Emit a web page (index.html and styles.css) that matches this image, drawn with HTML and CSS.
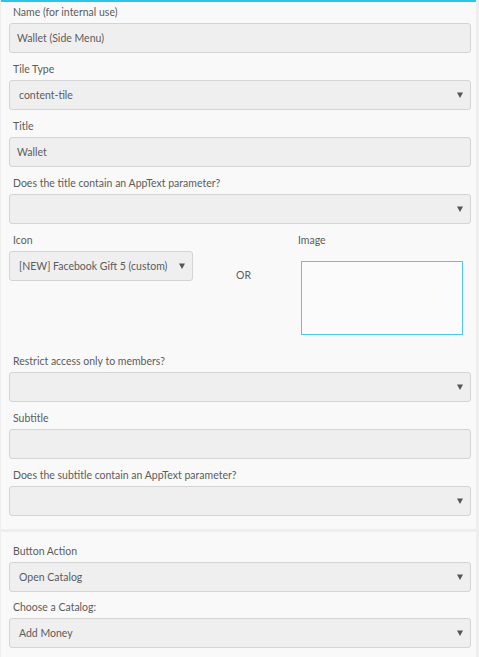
FILE: index.html
```html
<!DOCTYPE html>
<html>
<head>
<meta charset="utf-8">
<link rel="stylesheet" href="styles.css">
</head>
<body>
<div class="panel panel-main">
  <div class="field">
    <div class="label">Name (for internal use)</div>
    <div class="control input">Wallet (Side Menu)</div>
  </div>
  <div class="field">
    <div class="label">Tile Type</div>
    <div class="control select"><span>content-tile</span><svg class="arrow" width="6" height="6" viewBox="0 0 6 6"><path d="M0 0.5H6L3 6Z"/></svg></div>
  </div>
  <div class="field">
    <div class="label">Title</div>
    <div class="control input">Wallet</div>
  </div>
  <div class="field">
    <div class="label">Does the title contain an AppText parameter?</div>
    <div class="control select"><span></span><svg class="arrow" width="6" height="6" viewBox="0 0 6 6"><path d="M0 0.5H6L3 6Z"/></svg></div>
  </div>
  <div class="icon-row">
    <div class="icon-col">
      <div class="label">Icon</div>
      <div class="control select"><span>[NEW] Facebook Gift 5 (custom)</span><svg class="arrow" width="6" height="6" viewBox="0 0 6 6"><path d="M0 0.5H6L3 6Z"/></svg></div>
    </div>
    <div class="or">OR</div>
    <div class="image-col">
      <div class="label label-plain">Image</div>
      <div class="image-box"></div>
    </div>
  </div>
  <div class="field field-after-icon">
    <div class="label">Restrict access only to members?</div>
    <div class="control select"><span></span><svg class="arrow" width="6" height="6" viewBox="0 0 6 6"><path d="M0 0.5H6L3 6Z"/></svg></div>
  </div>
  <div class="field">
    <div class="label">Subtitle</div>
    <div class="control input"></div>
  </div>
  <div class="field">
    <div class="label">Does the subtitle contain an AppText parameter?</div>
    <div class="control select"><span></span><svg class="arrow" width="6" height="6" viewBox="0 0 6 6"><path d="M0 0.5H6L3 6Z"/></svg></div>
  </div>
</div>
<div class="panel panel-action">
  <div class="field">
    <div class="label">Button Action</div>
    <div class="control select"><span>Open Catalog</span><svg class="arrow" width="6" height="6" viewBox="0 0 6 6"><path d="M0 0.5H6L3 6Z"/></svg></div>
  </div>
  <div class="field">
    <div class="label">Choose a Catalog:</div>
    <div class="control select"><span>Add Money</span><svg class="arrow" width="6" height="6" viewBox="0 0 6 6"><path d="M0 0.5H6L3 6Z"/></svg></div>
  </div>
</div>
</body>
</html>
```

FILE: styles.css
```css
html, body {
  margin: 0;
  padding: 0;
  background: #eeeeee;
}
body {
  font-family: Lato, "Open Sans", "Liberation Sans", sans-serif;
  font-size: 10.5px;
  color: #5c5c5c;
  width: 479px;
  height: 657px;
  overflow: hidden;
}
.panel {
  background: #f9f9f9;
  margin-left: 1px;
  width: 475px;
  box-sizing: border-box;
  padding: 0 5px 0 8px;
  display: flex;
  flex-direction: column;
  gap: 9px;
}
.panel-main {
  border-top: 2px solid #2cc5e9;
  padding-top: 3px;
  padding-bottom: 13px;
}
.panel-action {
  margin-top: 3px;
  padding-top: 12px;
  padding-bottom: 10px;
  gap: 8px;
}
.field {
  display: flex;
  flex-direction: column;
}
.field-after-icon {
  margin-top: 10px;
}
.label {
  line-height: 14px;
  height: 14px;
  margin-bottom: 4px;
  padding-left: 4px;
  color: #5c5c5c;
  white-space: nowrap;
}
.label-plain {
  padding-left: 0;
}
.control {
  height: 30px;
  box-sizing: border-box;
  background: #efefef;
  border: 1px solid #d4d4d4;
  border-radius: 3px;
  display: flex;
  align-items: center;
  color: #5c5c5c;
  white-space: nowrap;
}
.input {
  padding-left: 7px;
}
.select {
  padding-left: 9px;
  padding-right: 7px;
  justify-content: space-between;
}
.arrow {
  fill: #555;
  flex: none;
}
.icon-row {
  display: flex;
  align-items: flex-start;
}
.icon-col {
  width: 184px;
  display: flex;
  flex-direction: column;
}
.or {
  margin-left: 43px;
  margin-top: 35px;
  width: 62px;
  line-height: 14px;
}
.image-col {
  display: flex;
  flex-direction: column;
}
.image-box {
  margin-top: 10px;
  margin-left: 3px;
  width: 162px;
  height: 74px;
  box-sizing: border-box;
  border: 1px solid #4ccbe8;
  background: #fbfbfb;
}
```
